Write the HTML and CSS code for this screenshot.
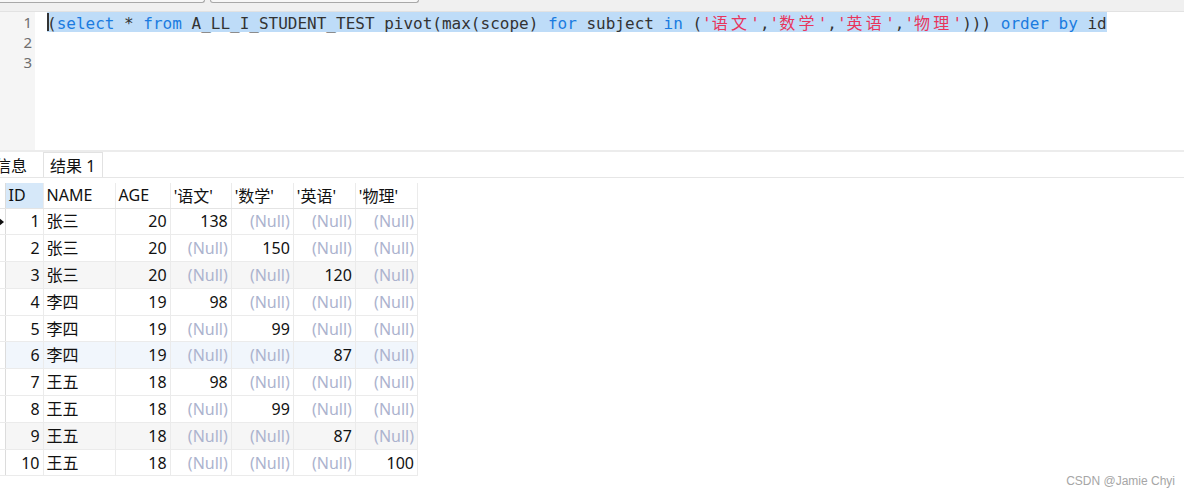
FILE: index.html
```html
<!DOCTYPE html>
<html>
<head>
<meta charset="utf-8">
<link rel="stylesheet" href="styles.css">
</head>
<body>
<div class="page">
  <div class="topbar">
    <div class="box box-a"></div>
    <div class="box box-b"></div>
  </div>
  <div class="editor">
    <div class="gutter">
      <div class="ln">1</div>
      <div class="ln">2</div>
      <div class="ln">3</div>
    </div>
    <div class="code">
      <div class="line"><span class="sel"><span class="caret"></span>(<span class="kw">select</span> * <span class="kw">from</span> A_LL_I_STUDENT_TEST pivot(max(scope) <span class="kw">for</span> subject <span class="kw">in</span> (<span class="str">'<span class="cjk">语文</span>'</span>,<span class="str">'<span class="cjk">数学</span>'</span>,<span class="str">'<span class="cjk">英语</span>'</span>,<span class="str">'<span class="cjk">物理</span>'</span>))) <span class="kw">order</span> <span class="kw">by</span> id</span></div>
      <div class="line"></div>
      <div class="line"></div>
    </div>
  </div>
  <div class="tabs">
    <div class="tab">信息</div>
    <div class="tab active">结果 1</div>
  </div>
  <div class="grid-wrap">
    <table class="grid">
      <colgroup>
        <col class="c-ind"><col class="c-id"><col class="c-name"><col class="c-age">
        <col class="c-s"><col class="c-s2"><col class="c-s2"><col class="c-s2">
      </colgroup>
      <thead>
        <tr><th class="ind"></th><th class="hl">ID</th><th>NAME</th><th>AGE</th><th>'语文'</th><th>'数学'</th><th>'英语'</th><th>'物理'</th></tr>
      </thead>
      <tbody>
        <tr><td class="ind"><span class="arrow"></span></td><td class="n">1</td><td>张三</td><td class="n">20</td><td class="n">138</td><td class="n nul">(Null)</td><td class="n nul">(Null)</td><td class="n nul">(Null)</td></tr>
        <tr><td class="ind"></td><td class="n">2</td><td>张三</td><td class="n">20</td><td class="n nul">(Null)</td><td class="n">150</td><td class="n nul">(Null)</td><td class="n nul">(Null)</td></tr>
        <tr class="alt"><td class="ind"></td><td class="n">3</td><td>张三</td><td class="n">20</td><td class="n nul">(Null)</td><td class="n nul">(Null)</td><td class="n">120</td><td class="n nul">(Null)</td></tr>
        <tr><td class="ind"></td><td class="n">4</td><td>李四</td><td class="n">19</td><td class="n">98</td><td class="n nul">(Null)</td><td class="n nul">(Null)</td><td class="n nul">(Null)</td></tr>
        <tr><td class="ind"></td><td class="n">5</td><td>李四</td><td class="n">19</td><td class="n nul">(Null)</td><td class="n">99</td><td class="n nul">(Null)</td><td class="n nul">(Null)</td></tr>
        <tr class="hov"><td class="ind"></td><td class="n">6</td><td>李四</td><td class="n">19</td><td class="n nul">(Null)</td><td class="n nul">(Null)</td><td class="n">87</td><td class="n nul">(Null)</td></tr>
        <tr><td class="ind"></td><td class="n">7</td><td>王五</td><td class="n">18</td><td class="n">98</td><td class="n nul">(Null)</td><td class="n nul">(Null)</td><td class="n nul">(Null)</td></tr>
        <tr><td class="ind"></td><td class="n">8</td><td>王五</td><td class="n">18</td><td class="n nul">(Null)</td><td class="n">99</td><td class="n nul">(Null)</td><td class="n nul">(Null)</td></tr>
        <tr class="alt"><td class="ind"></td><td class="n">9</td><td>王五</td><td class="n">18</td><td class="n nul">(Null)</td><td class="n nul">(Null)</td><td class="n">87</td><td class="n nul">(Null)</td></tr>
        <tr><td class="ind"></td><td class="n">10</td><td>王五</td><td class="n">18</td><td class="n nul">(Null)</td><td class="n nul">(Null)</td><td class="n nul">(Null)</td><td class="n">100</td></tr>
      </tbody>
    </table>
  </div>
  <div class="watermark">CSDN @Jamie Chyi</div>
</div>
</body>
</html>
```

FILE: styles.css
```css
* { box-sizing: border-box; }
html, body { margin: 0; padding: 0; background: #fff; }
.page {
  position: relative;
  width: 1184px;
  height: 494px;
  overflow: hidden;
  font-family: "Noto Sans", "Noto Sans CJK SC", sans-serif;
  color: #111;
}
.topbar {
  height: 12px;
  background: #f0f0f0;
  border-bottom: 1px solid #e2e2e2;
  display: flex;
  align-items: flex-start;
  gap: 5px;
}
.box {
  height: 3px;
  border: 1px solid #a8a8a8;
  border-top: none;
  border-radius: 0 0 3px 3px;
  background: #f7f7f7;
}
.box-a { width: 211px; margin-left: -6px; }
.box-b { width: 209px; }

.editor {
  display: flex;
  height: 138px;
}
.gutter {
  width: 35px;
  background: #f5f5f5;
}
.ln {
  height: 20px;
  line-height: 20px;
  text-align: right;
  padding-right: 3px;
  font-family: "Noto Sans", sans-serif;
  font-size: 15px;
  color: #6e6e6e;
}
.code {
  flex: 1;
  padding-left: 12px;
  font-family: "DejaVu Sans Mono", monospace;
  font-size: 16px;
  color: #333;
}
.line {
  height: 20px;
  line-height: 20px;
  white-space: pre;
}
.sel {
  position: relative;
  display: inline-block;
  height: 20px;
  background: #bedcf8;
}
.caret {
  position: absolute;
  left: 0;
  top: 1px;
  width: 2px;
  height: 18px;
  background: #333;
}
.kw { color: #1a7be0; }
.str { color: #e8345c; }
.cjk {
  font-family: "Noto Sans CJK SC", sans-serif;
  letter-spacing: 3.26px;
}

.tabs {
  display: flex;
  height: 28px;
  border-top: 2px solid #ececec;
  border-bottom: 1px solid #e6e6e6;
  background: #fff;
  font-size: 16px;
}
.tab {
  display: flex;
  align-items: center;
  padding: 0 7px;
  height: 25px;
  color: #111;
}
.tab:first-child { margin-left: -12px; padding-left: 7px; padding-right: 16px; }
.tab.active {
  background: #fff;
  border: 1px solid #e2e2e2;
  border-bottom: none;
  padding: 0 7px 0 6px;
}

.grid-wrap {
  padding-top: 5px;
}
.grid {
  border-collapse: collapse;
  table-layout: fixed;
  width: 418px;
  font-size: 16px;
}
.c-ind { width: 5px; }
.c-id { width: 38px; }
.c-name { width: 72px; }
.c-age { width: 55px; }
.c-s { width: 61px; }
.c-s2 { width: 62px; }
.grid th, .grid td {
  border: 1px solid #ebebeb;
  padding: 0 3px;
  white-space: nowrap;
  overflow: hidden;
}
.grid th {
  height: 25px;
  font-weight: normal;
  text-align: left;
  border-top: none;
  border-bottom-color: #e4e4e4;
}
.grid th.hl { background: #d6e8f9; }
.grid td {
  height: 26.8px;
  line-height: 24px;
}
.grid .ind {
  padding: 0;
  border-left: none;
  border-right-color: #dcdcdc;
  position: relative;
}
.grid td.n { text-align: right; }
.grid td.nul { color: #acb3ce; }
.grid tr.alt td { background: #f6f6f6; }
.grid tr.hov td { background: #f1f6fc; }
.grid tr td.ind { background: #fff; }
.arrow {
  position: absolute;
  left: -1px;
  top: 9px;
  width: 0;
  height: 0;
  border-top: 4px solid transparent;
  border-bottom: 4px solid transparent;
  border-left: 5px solid #111;
}

.watermark {
  position: absolute;
  right: 9px;
  bottom: 6px;
  font-family: "Liberation Sans", sans-serif;
  font-size: 12px;
  color: #a6a6a6;
}
```
